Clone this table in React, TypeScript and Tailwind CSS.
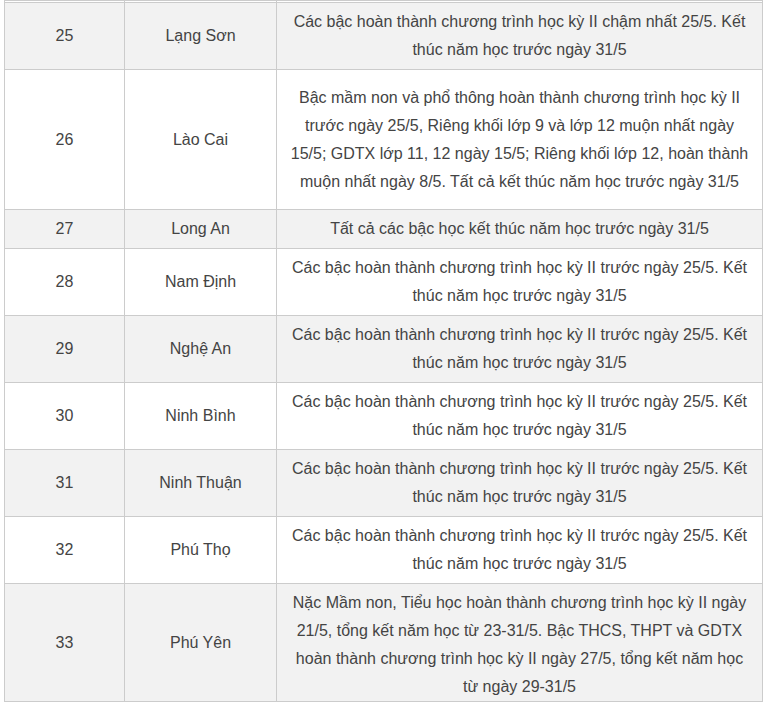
type Row = { no: string; name: string; text: string; pad?: string };

const rows: Row[] = [
  { no: "25", name: "Lạng Sơn", text: "Các bậc hoàn thành chương trình học kỳ II chậm nhất 25/5. Kết thúc năm học trước ngày 31/5" },
  {
    no: "26",
    name: "Lào Cai",
    text: "Bậc mầm non và phổ thông hoàn thành chương trình học kỳ II trước ngày 25/5, Riêng khối lớp 9 và lớp 12 muộn nhất ngày 15/5; GDTX lớp 11, 12 ngày 15/5; Riêng khối lớp 12, hoàn thành muộn nhất ngày 8/5. Tất cả kết thúc năm học trước ngày 31/5",
    pad: "py-[13.5px]",
  },
  { no: "27", name: "Long An", text: "Tất cả các bậc học kết thúc năm học trước ngày 31/5" },
  { no: "28", name: "Nam Định", text: "Các bậc hoàn thành chương trình học kỳ II trước ngày 25/5. Kết thúc năm học trước ngày 31/5" },
  { no: "29", name: "Nghệ An", text: "Các bậc hoàn thành chương trình học kỳ II trước ngày 25/5. Kết thúc năm học trước ngày 31/5" },
  { no: "30", name: "Ninh Bình", text: "Các bậc hoàn thành chương trình học kỳ II trước ngày 25/5. Kết thúc năm học trước ngày 31/5" },
  { no: "31", name: "Ninh Thuận", text: "Các bậc hoàn thành chương trình học kỳ II trước ngày 25/5. Kết thúc năm học trước ngày 31/5" },
  { no: "32", name: "Phú Thọ", text: "Các bậc hoàn thành chương trình học kỳ II trước ngày 25/5. Kết thúc năm học trước ngày 31/5" },
  {
    no: "33",
    name: "Phú Yên",
    text: "Nặc Mầm non, Tiểu học hoàn thành chương trình học kỳ II ngày 21/5, tổng kết năm học từ 23-31/5. Bậc THCS, THPT và GDTX hoàn thành chương trình học kỳ II ngày 27/5, tổng kết năm học từ ngày 29-31/5",
    pad: "pt-[5px] pb-0",
  },
];

export default function App() {
  return (
    <div className="h-[704px] w-[764px] overflow-hidden bg-white pl-[4px] font-['Liberation_Sans',Arial,sans-serif] text-[16px] leading-[28px] text-[#444]">
      <table className="w-[759px] table-fixed border-collapse">
        <colgroup>
          <col className="w-[120px]" />
          <col className="w-[152px]" />
          <col />
        </colgroup>
        <tbody>
          <tr className="h-[2px] bg-white">
            <td className="border border-[#cccccc] p-0" />
            <td className="border border-[#cccccc] p-0" />
            <td className="border border-[#cccccc] p-0" />
          </tr>
          {rows.map((r, i) => (
            <tr key={r.no} className={i % 2 === 0 ? "bg-[#f2f2f2]" : "bg-white"}>
              <td className="border border-[#cccccc] px-2 py-[5px] text-center align-middle">{r.no}</td>
              <td className="border border-[#cccccc] px-2 py-[5px] text-center align-middle">{r.name}</td>
              <td className={`border border-[#cccccc] px-3 text-center align-middle ${r.pad ?? "py-[5px]"}`}>
                {r.text}
              </td>
            </tr>
          ))}
        </tbody>
      </table>
    </div>
  );
}
